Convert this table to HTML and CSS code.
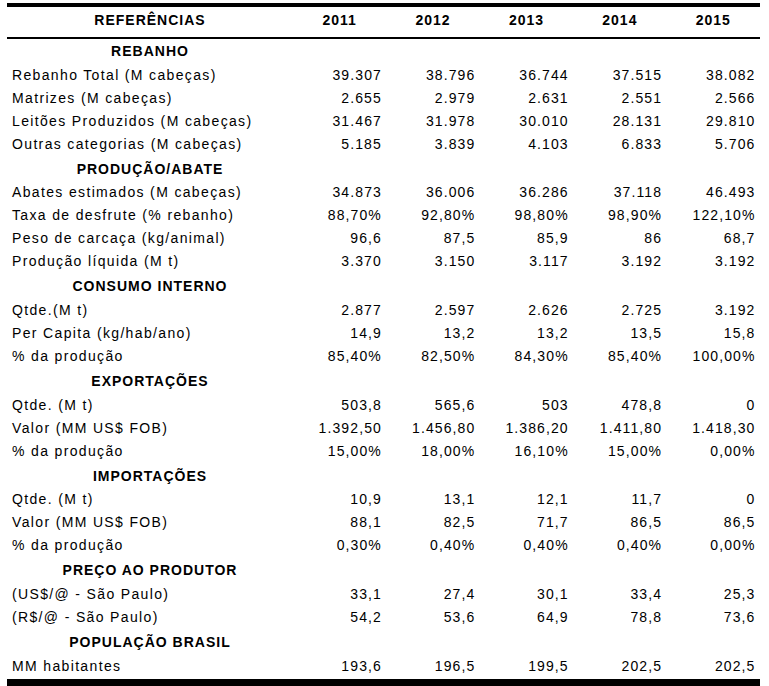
FILE: index.html
```html
<!DOCTYPE html>
<html lang="pt-BR">
<head>
<meta charset="utf-8">
<title>Referências</title>
<link rel="stylesheet" href="styles.css">
</head>
<body>
<table class="sheet">
  <colgroup>
    <col class="c-label">
    <col class="c-year"><col class="c-year"><col class="c-year"><col class="c-year"><col class="c-year">
  </colgroup>
  <thead>
    <tr class="head">
      <th>REFERÊNCIAS</th><th>2011</th><th>2012</th><th>2013</th><th>2014</th><th>2015</th>
    </tr>
  </thead>
  <tbody>
    <tr class="sec"><td>REBANHO</td><td></td><td></td><td></td><td></td><td></td></tr>
    <tr class="row"><td>Rebanho Total (M cabeças)</td><td>39.307</td><td>38.796</td><td>36.744</td><td>37.515</td><td>38.082</td></tr>
    <tr class="row"><td>Matrizes (M cabeças)</td><td>2.655</td><td>2.979</td><td>2.631</td><td>2.551</td><td>2.566</td></tr>
    <tr class="row"><td>Leitões Produzidos (M cabeças)</td><td>31.467</td><td>31.978</td><td>30.010</td><td>28.131</td><td>29.810</td></tr>
    <tr class="row"><td>Outras categorias (M cabeças)</td><td>5.185</td><td>3.839</td><td>4.103</td><td>6.833</td><td>5.706</td></tr>
    <tr class="sec"><td>PRODUÇÃO/ABATE</td><td></td><td></td><td></td><td></td><td></td></tr>
    <tr class="row"><td>Abates estimados (M cabeças)</td><td>34.873</td><td>36.006</td><td>36.286</td><td>37.118</td><td>46.493</td></tr>
    <tr class="row"><td>Taxa de desfrute (% rebanho)</td><td>88,70%</td><td>92,80%</td><td>98,80%</td><td>98,90%</td><td>122,10%</td></tr>
    <tr class="row"><td>Peso de carcaça (kg/animal)</td><td>96,6</td><td>87,5</td><td>85,9</td><td>86</td><td>68,7</td></tr>
    <tr class="row"><td>Produção líquida (M t)</td><td>3.370</td><td>3.150</td><td>3.117</td><td>3.192</td><td>3.192</td></tr>
    <tr class="sec"><td>CONSUMO INTERNO</td><td></td><td></td><td></td><td></td><td></td></tr>
    <tr class="row"><td>Qtde.(M t)</td><td>2.877</td><td>2.597</td><td>2.626</td><td>2.725</td><td>3.192</td></tr>
    <tr class="row"><td>Per Capita (kg/hab/ano)</td><td>14,9</td><td>13,2</td><td>13,2</td><td>13,5</td><td>15,8</td></tr>
    <tr class="row"><td>% da produção</td><td>85,40%</td><td>82,50%</td><td>84,30%</td><td>85,40%</td><td>100,00%</td></tr>
    <tr class="sec"><td>EXPORTAÇÕES</td><td></td><td></td><td></td><td></td><td></td></tr>
    <tr class="row"><td>Qtde. (M t)</td><td>503,8</td><td>565,6</td><td>503</td><td>478,8</td><td>0</td></tr>
    <tr class="row"><td>Valor (MM US$ FOB)</td><td>1.392,50</td><td>1.456,80</td><td>1.386,20</td><td>1.411,80</td><td>1.418,30</td></tr>
    <tr class="row"><td>% da produção</td><td>15,00%</td><td>18,00%</td><td>16,10%</td><td>15,00%</td><td>0,00%</td></tr>
    <tr class="sec"><td>IMPORTAÇÕES</td><td></td><td></td><td></td><td></td><td></td></tr>
    <tr class="row"><td>Qtde. (M t)</td><td>10,9</td><td>13,1</td><td>12,1</td><td>11,7</td><td>0</td></tr>
    <tr class="row"><td>Valor (MM US$ FOB)</td><td>88,1</td><td>82,5</td><td>71,7</td><td>86,5</td><td>86,5</td></tr>
    <tr class="row"><td>% da produção</td><td>0,30%</td><td>0,40%</td><td>0,40%</td><td>0,40%</td><td>0,00%</td></tr>
    <tr class="sec"><td>PREÇO AO PRODUTOR</td><td></td><td></td><td></td><td></td><td></td></tr>
    <tr class="row"><td>(US$/@ - São Paulo)</td><td>33,1</td><td>27,4</td><td>30,1</td><td>33,4</td><td>25,3</td></tr>
    <tr class="row"><td>(R$/@ - São Paulo)</td><td>54,2</td><td>53,6</td><td>64,9</td><td>78,8</td><td>73,6</td></tr>
    <tr class="sec"><td>POPULAÇÃO BRASIL</td><td></td><td></td><td></td><td></td><td></td></tr>
    <tr class="row"><td>MM habitantes</td><td>193,6</td><td>196,5</td><td>199,5</td><td>202,5</td><td>202,5</td></tr>
  </tbody>
</table>
</body>
</html>
```

FILE: styles.css
```css
html, body {
  margin: 0;
  padding: 0;
  background: #fff;
  overflow: hidden;
}
body {
  padding: 3px 0 0 7px;
  font-family: "Liberation Sans", Arial, sans-serif;
  color: #000;
}
.sheet {
  width: 753px;
  table-layout: fixed;
  border-collapse: separate;
  border-spacing: 0;
  border-top: 4px solid #000;
  border-bottom: 7px solid #000;
}
.c-label { width: 286px; }
.c-year { width: 93.4px; }

.sheet th,
.sheet td {
  padding: 0;
  vertical-align: top;
  line-height: 16px;
  white-space: nowrap;
}

.head { height: 32px; }
.head th {
  border-bottom: 2px solid #000;
  font-size: 14px;
  font-weight: bold;
  letter-spacing: 1px;
  padding-top: 5px;
  text-align: center;
}

.sec { height: 25.7px; }
.sec td {
  font-size: 14px;
  font-weight: bold;
  letter-spacing: 1px;
  padding-top: 4px;
  text-align: center;
}

.row { height: 23px; }
.row td {
  font-size: 14px;
  letter-spacing: 1.1px;
  padding-top: 2px;
  padding-right: 4.5px;
  text-align: right;
}
.row td:first-child {
  text-align: left;
  letter-spacing: 1.35px;
  padding-left: 5px;
  padding-right: 0;
}
```
